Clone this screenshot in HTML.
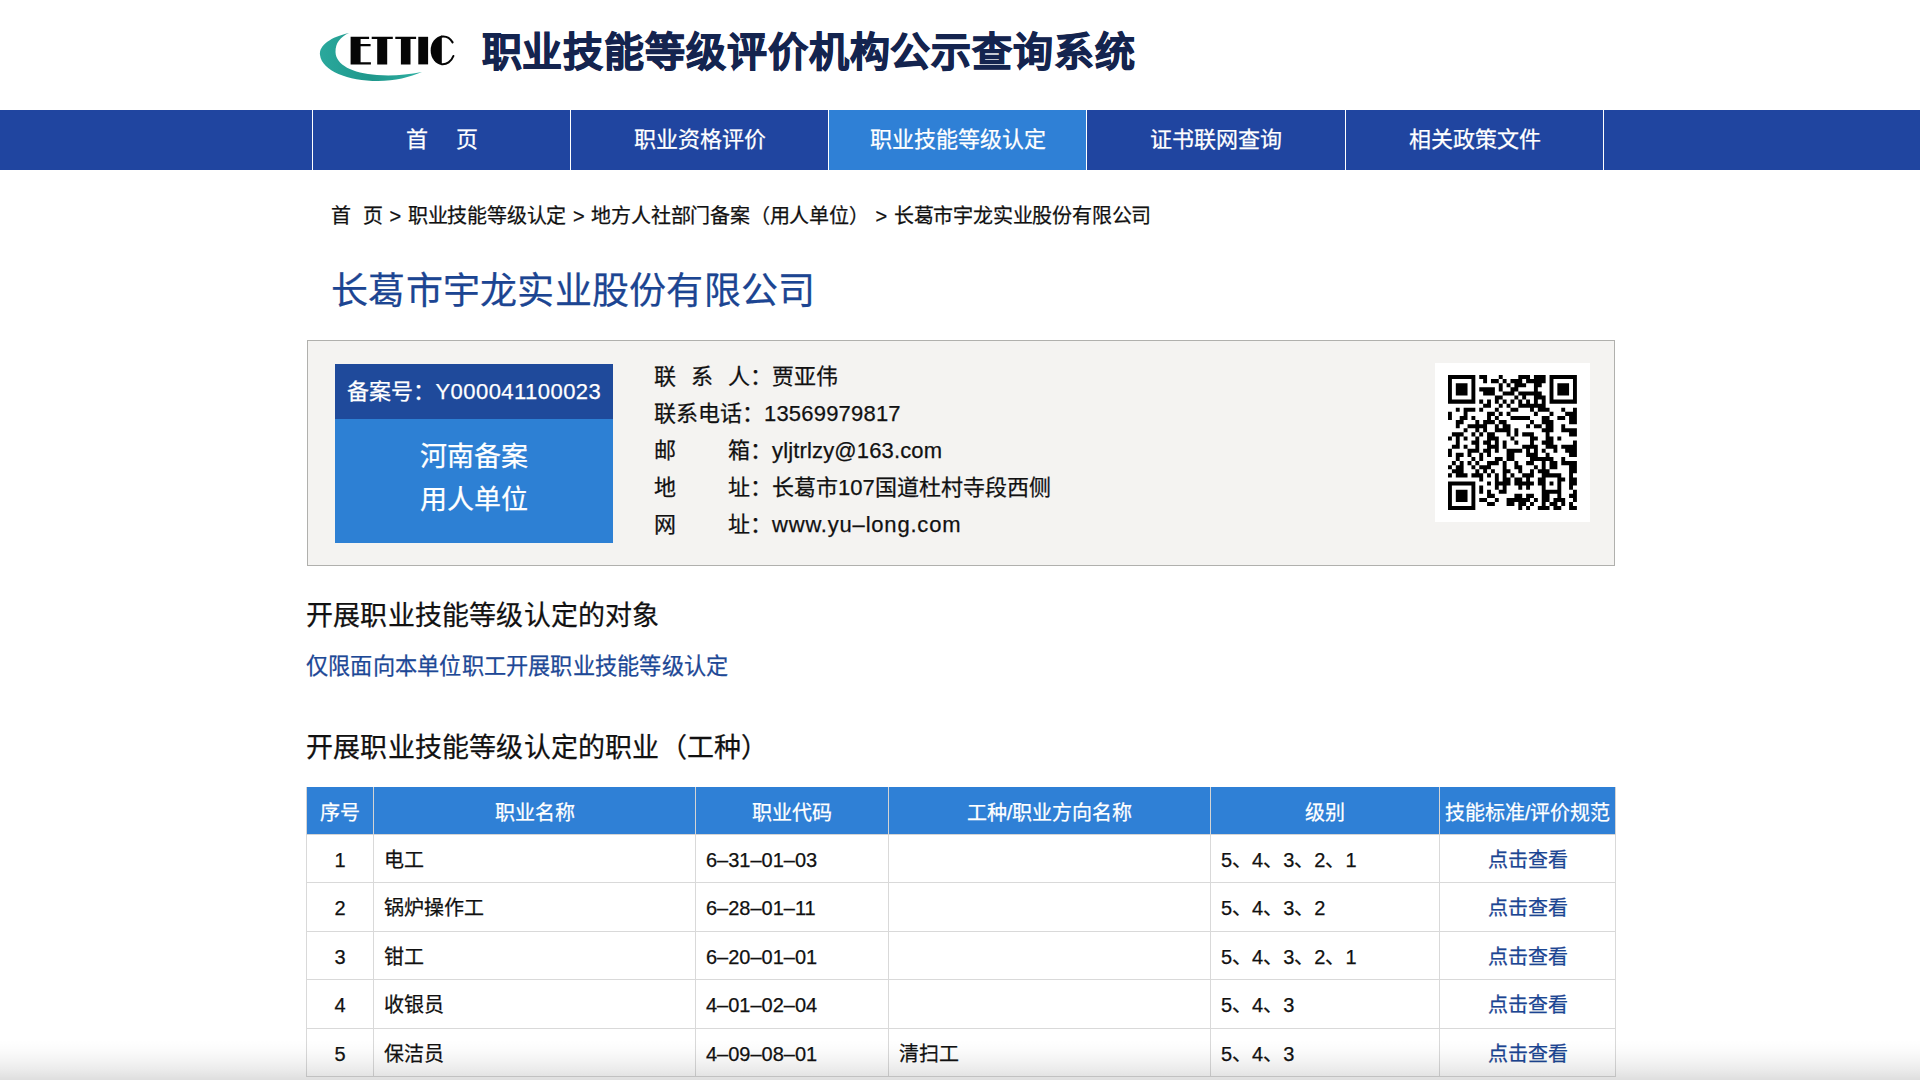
<!DOCTYPE html>
<html lang="zh-CN">
<head>
<meta charset="utf-8">
<title>职业技能等级评价机构公示查询系统</title>
<style>
*{margin:0;padding:0;box-sizing:border-box}
html,body{width:1920px;height:1080px;overflow:hidden;background:#fff}
body{font-family:"Liberation Sans",sans-serif;color:#111;position:relative;-webkit-text-stroke:0.25px currentColor}
.abs{position:absolute;white-space:nowrap}
#logo{left:300px;top:20px;width:180px;height:80px}
#title{left:481.5px;top:27px;font-size:40px;font-weight:bold;color:#14244f;line-height:50px;letter-spacing:0.9px;-webkit-text-stroke:1px #14244f}
#nav{left:0;top:110px;width:1920px;height:60px;background:#2045a0}
.ni{position:absolute;top:0;height:60px;line-height:60px;text-align:center;color:#fff;font-size:22px;border-left:1.5px solid #fff}
.ni.act{background:#2f80d6}
#bc{left:331px;top:202px;font-size:20px;line-height:28px;color:#111;word-spacing:1.5px;letter-spacing:-0.2px}
#cname{left:331px;top:268px;font-size:37px;line-height:48px;color:#1c4592;letter-spacing:0.25px}
#info{left:307px;top:340px;width:1308px;height:226px;background:#f4f3f1;border:1.5px solid #b0b0ad}
#card{left:335px;top:364px;width:278px;height:179px;background:#2d80d4}
#cardtop{left:0;top:0;width:278px;height:55px;background:#1f4a9b;color:#fff;font-size:22px;line-height:55px;text-align:center}
#cardb{left:0;top:55px;width:278px;color:#fff;font-size:27px;line-height:43.5px;text-align:center;padding-top:16.5px}
.il{position:absolute;left:654px;font-size:22px;line-height:30px;color:#111}
.lb{display:inline-block}
#qr{left:1435px;top:362.5px;width:154.5px;height:159px;background:#fff}
.h2{left:306px;font-size:27px;line-height:36px;color:#111;letter-spacing:0.2px}
#obj{left:306px;top:652px;font-size:22.2px;line-height:30px;color:#1d4896;letter-spacing:0.22px}
table{position:absolute;left:306px;top:787px;width:1310px;border-collapse:collapse;font-size:20px;table-layout:fixed}
th{line-height:24px;background:#2f80d6;color:#fff;font-weight:normal;height:47px;padding-top:5px;box-sizing:border-box;border:1.5px solid #d4d4d4;border-top:none}
td{line-height:24px;height:48.55px;border:1.5px solid #d9d9d9;color:#111;padding-left:10px;padding-top:3px;box-sizing:border-box}
td.c{text-align:center;padding-left:0}
td a{color:#1c4592;text-decoration:none}
#shade{left:0;top:1040px;width:1920px;height:40px;background:linear-gradient(to bottom,rgba(0,0,0,0) 0%,rgba(0,0,0,0.015) 25%,rgba(0,0,0,0.045) 50%,rgba(0,0,0,0.08) 75%,rgba(0,0,0,0.13) 100%)}
</style>
</head>
<body>
<svg id="logo" class="abs" viewBox="300 20 180 80">
<defs><linearGradient id="tg" x1="0" y1="0" x2="1" y2="0"><stop offset="0" stop-color="#2aa89c"/><stop offset="0.5" stop-color="#1f978b"/><stop offset="1" stop-color="#2fb0a3"/></linearGradient></defs>
<path d="M349 33 C331 37 319 45 320 55 C322 71 348 81 378 81 C395 81 410 77 422 72 C406 75 392 76 377 75 C352 73 336 65 335.5 52 C335.5 43 340 37 349 33 Z" fill="url(#tg)"/>
<g fill="#050505"><path d="M350.6 36.7H369.1V38.9H360.6V44.1H370.6V46.3H360.6V62.2H370.9V64.4H350.6Z"/><path d="M371.7 36.7H392.8V38.9H387.2V64.4H377.2V38.9H371.7Z"/><path d="M395.3 36.7H416.1V38.9H410.5V64.4H400.9V38.9H395.3Z"/><path d="M418.3 36.8H428.1V64.4H418.3Z"/><path d="M441.8 35.7A12.6 14.8 0 0 0 441.8 65.1Z"/></g><path d="M441.6 36.6A11.7 13.9 0 0 1 452.6 42.4M441.6 64.2A11.7 13.9 0 0 0 453.4 56" fill="none" stroke="#050505" stroke-width="2.1" stroke-linecap="round"/>
</svg>
<div id="title" class="abs">职业技能等级评价机构公示查询系统</div>
<div id="nav" class="abs">
  <div class="ni" style="left:312px;width:258px">首<span style="display:inline-block;width:28px"></span>页</div>
  <div class="ni" style="left:570px;width:258px">职业资格评价</div>
  <div class="ni act" style="left:828px;width:258px">职业技能等级认定</div>
  <div class="ni" style="left:1086px;width:259px">证书联网查询</div>
  <div class="ni" style="left:1345px;width:258px">相关政策文件</div>
  <div class="ni" style="left:1603px;width:2px"></div>
</div>
<div id="bc" class="abs">首<span style="display:inline-block;width:12px"></span>页 &gt; 职业技能等级认定 &gt; 地方人社部门备案（用人单位） &gt; 长葛市宇龙实业股份有限公司</div>
<div id="cname" class="abs">长葛市宇龙实业股份有限公司</div>
<div id="info" class="abs"></div>
<div id="card" class="abs">
  <div id="cardtop" class="abs"><span style="position:absolute;left:12px">备案号：</span><span style="position:absolute;left:100.5px;letter-spacing:0.45px">Y000041100023</span></div>
  <div id="cardb" class="abs">河南备案<br>用人单位</div>
</div>
<div class="il abs" style="top:361.5px"><span class="lb" style="width:37px">联</span><span class="lb" style="width:37px">系</span><span class="lb" style="width:44px">人：</span><span class="v">贾亚伟</span></div>
<div class="il abs" style="top:398.5px"><span class="lb" style="width:110px">联系电话：</span><span class="v" style="letter-spacing:0.2px">13569979817</span></div>
<div class="il abs" style="top:435.5px"><span class="lb" style="width:74px">邮</span><span class="lb" style="width:44px">箱：</span><span class="v" style="letter-spacing:0.15px">yljtrlzy@163.com</span></div>
<div class="il abs" style="top:472.5px"><span class="lb" style="width:74px">地</span><span class="lb" style="width:44px">址：</span><span class="v">长葛市107国道杜村寺段西侧</span></div>
<div class="il abs" style="top:509.5px"><span class="lb" style="width:74px">网</span><span class="lb" style="width:44px">址：</span><span class="v" style="letter-spacing:0.8px">www.yu–long.com</span></div>
<div id="qr" class="abs"><svg width="128.9" height="135.2" viewBox="0 0 33 33" preserveAspectRatio="none" style="position:absolute;left:13px;top:12.7px"><path fill="#000" d="M0 0h7v1h-7zM8 0h2v1h-2zM13 0h1v1h-1zM18 0h3v1h-3zM22 0h3v1h-3zM26 0h7v1h-7zM0 1h1v1h-1zM6 1h1v1h-1zM9 1h1v1h-1zM11 1h2v1h-2zM14 1h1v1h-1zM16 1h3v1h-3zM20 1h5v1h-5zM26 1h1v1h-1zM32 1h1v1h-1zM0 2h1v1h-1zM2 2h3v1h-3zM6 2h1v1h-1zM13 2h1v1h-1zM15 2h1v1h-1zM17 2h3v1h-3zM22 2h2v1h-2zM26 2h1v1h-1zM28 2h3v1h-3zM32 2h1v1h-1zM0 3h1v1h-1zM2 3h3v1h-3zM6 3h1v1h-1zM8 3h4v1h-4zM13 3h1v1h-1zM16 3h2v1h-2zM22 3h1v1h-1zM26 3h1v1h-1zM28 3h3v1h-3zM32 3h1v1h-1zM0 4h1v1h-1zM2 4h3v1h-3zM6 4h1v1h-1zM9 4h3v1h-3zM14 4h3v1h-3zM18 4h6v1h-6zM26 4h1v1h-1zM28 4h3v1h-3zM32 4h1v1h-1zM0 5h1v1h-1zM6 5h1v1h-1zM12 5h2v1h-2zM17 5h1v1h-1zM19 5h1v1h-1zM22 5h3v1h-3zM26 5h1v1h-1zM32 5h1v1h-1zM0 6h7v1h-7zM8 6h1v1h-1zM10 6h1v1h-1zM12 6h1v1h-1zM14 6h1v1h-1zM16 6h1v1h-1zM18 6h1v1h-1zM20 6h1v1h-1zM22 6h1v1h-1zM24 6h1v1h-1zM26 6h7v1h-7zM9 7h2v1h-2zM13 7h1v1h-1zM15 7h1v1h-1zM18 7h7v1h-7zM2 8h1v1h-1zM4 8h3v1h-3zM8 8h1v1h-1zM12 8h1v1h-1zM16 8h2v1h-2zM21 8h1v1h-1zM23 8h3v1h-3zM29 8h1v1h-1zM32 8h1v1h-1zM0 9h1v1h-1zM4 9h1v1h-1zM10 9h2v1h-2zM13 9h1v1h-1zM15 9h1v1h-1zM22 9h1v1h-1zM26 9h1v1h-1zM30 9h3v1h-3zM0 10h1v1h-1zM3 10h2v1h-2zM6 10h1v1h-1zM10 10h1v1h-1zM12 10h1v1h-1zM16 10h5v1h-5zM24 10h2v1h-2zM28 10h2v1h-2zM31 10h2v1h-2zM2 11h2v1h-2zM7 11h1v1h-1zM9 11h3v1h-3zM13 11h2v1h-2zM21 11h1v1h-1zM24 11h3v1h-3zM31 11h2v1h-2zM2 12h1v1h-1zM5 12h5v1h-5zM12 12h1v1h-1zM14 12h2v1h-2zM20 12h1v1h-1zM22 12h2v1h-2zM25 12h2v1h-2zM29 12h1v1h-1zM4 13h1v1h-1zM7 13h1v1h-1zM9 13h1v1h-1zM12 13h4v1h-4zM17 13h1v1h-1zM24 13h3v1h-3zM29 13h4v1h-4zM1 14h3v1h-3zM6 14h1v1h-1zM8 14h1v1h-1zM10 14h2v1h-2zM15 14h1v1h-1zM17 14h1v1h-1zM19 14h3v1h-3zM25 14h1v1h-1zM31 14h2v1h-2zM0 15h1v1h-1zM2 15h1v1h-1zM4 15h1v1h-1zM7 15h1v1h-1zM10 15h3v1h-3zM16 15h1v1h-1zM21 15h2v1h-2zM25 15h2v1h-2zM28 15h1v1h-1zM2 16h1v1h-1zM6 16h2v1h-2zM9 16h2v1h-2zM12 16h1v1h-1zM14 16h1v1h-1zM17 16h1v1h-1zM21 16h1v1h-1zM24 16h3v1h-3zM32 16h1v1h-1zM1 17h2v1h-2zM4 17h1v1h-1zM7 17h1v1h-1zM10 17h3v1h-3zM14 17h1v1h-1zM19 17h4v1h-4zM25 17h3v1h-3zM29 17h4v1h-4zM0 18h1v1h-1zM5 18h3v1h-3zM9 18h2v1h-2zM12 18h1v1h-1zM15 18h4v1h-4zM20 18h1v1h-1zM22 18h1v1h-1zM24 18h1v1h-1zM27 18h1v1h-1zM30 18h3v1h-3zM0 19h1v1h-1zM2 19h2v1h-2zM5 19h1v1h-1zM8 19h1v1h-1zM10 19h1v1h-1zM15 19h2v1h-2zM20 19h3v1h-3zM25 19h1v1h-1zM31 19h2v1h-2zM2 20h1v1h-1zM6 20h1v1h-1zM8 20h1v1h-1zM12 20h2v1h-2zM15 20h2v1h-2zM21 20h6v1h-6zM29 20h1v1h-1zM1 21h1v1h-1zM3 21h1v1h-1zM5 21h1v1h-1zM7 21h1v1h-1zM10 21h3v1h-3zM14 21h1v1h-1zM17 21h1v1h-1zM20 21h2v1h-2zM24 21h1v1h-1zM26 21h2v1h-2zM29 21h4v1h-4zM0 22h1v1h-1zM2 22h2v1h-2zM6 22h1v1h-1zM8 22h3v1h-3zM14 22h1v1h-1zM17 22h2v1h-2zM22 22h1v1h-1zM24 22h1v1h-1zM26 22h2v1h-2zM31 22h2v1h-2zM1 23h3v1h-3zM7 23h1v1h-1zM9 23h1v1h-1zM11 23h1v1h-1zM14 23h2v1h-2zM18 23h1v1h-1zM21 23h1v1h-1zM23 23h3v1h-3zM31 23h2v1h-2zM0 24h1v1h-1zM2 24h3v1h-3zM6 24h3v1h-3zM10 24h1v1h-1zM12 24h1v1h-1zM14 24h1v1h-1zM16 24h1v1h-1zM19 24h3v1h-3zM24 24h5v1h-5zM31 24h1v1h-1zM8 25h1v1h-1zM12 25h1v1h-1zM14 25h2v1h-2zM17 25h2v1h-2zM20 25h1v1h-1zM23 25h2v1h-2zM28 25h2v1h-2zM31 25h2v1h-2zM0 26h7v1h-7zM10 26h1v1h-1zM12 26h4v1h-4zM17 26h5v1h-5zM23 26h2v1h-2zM26 26h1v1h-1zM28 26h1v1h-1zM31 26h2v1h-2zM0 27h1v1h-1zM6 27h1v1h-1zM8 27h1v1h-1zM12 27h1v1h-1zM14 27h1v1h-1zM18 27h1v1h-1zM20 27h1v1h-1zM24 27h1v1h-1zM28 27h1v1h-1zM31 27h1v1h-1zM0 28h1v1h-1zM2 28h3v1h-3zM6 28h1v1h-1zM8 28h1v1h-1zM10 28h1v1h-1zM13 28h2v1h-2zM24 28h5v1h-5zM32 28h1v1h-1zM0 29h1v1h-1zM2 29h3v1h-3zM6 29h1v1h-1zM10 29h2v1h-2zM17 29h2v1h-2zM20 29h2v1h-2zM24 29h2v1h-2zM28 29h1v1h-1zM31 29h2v1h-2zM0 30h1v1h-1zM2 30h3v1h-3zM6 30h1v1h-1zM8 30h2v1h-2zM12 30h1v1h-1zM15 30h6v1h-6zM22 30h1v1h-1zM24 30h2v1h-2zM27 30h3v1h-3zM32 30h1v1h-1zM0 31h1v1h-1zM6 31h1v1h-1zM10 31h2v1h-2zM15 31h2v1h-2zM18 31h2v1h-2zM21 31h1v1h-1zM24 31h1v1h-1zM26 31h2v1h-2zM29 31h1v1h-1zM31 31h1v1h-1zM0 32h7v1h-7zM18 32h1v1h-1zM20 32h1v1h-1zM23 32h3v1h-3zM27 32h2v1h-2zM31 32h2v1h-2z"/></svg></div>
<div class="h2 abs" style="top:598px">开展职业技能等级认定的对象</div>
<div id="obj" class="abs">仅限面向本单位职工开展职业技能等级认定</div>
<div class="h2 abs" style="top:729.5px">开展职业技能等级认定的职业（工种）</div>
<table>
<tr><th style="width:67px">序号</th><th style="width:322px">职业名称</th><th style="width:193px">职业代码</th><th style="width:322px">工种/职业方向名称</th><th style="width:229px">级别</th><th>技能标准/评价规范</th></tr>
<tr><td class="c">1</td><td>电工</td><td>6–31–01–03</td><td></td><td>5、4、3、2、1</td><td class="c"><a>点击查看</a></td></tr>
<tr><td class="c">2</td><td>锅炉操作工</td><td>6–28–01–11</td><td></td><td>5、4、3、2</td><td class="c"><a>点击查看</a></td></tr>
<tr><td class="c">3</td><td>钳工</td><td>6–20–01–01</td><td></td><td>5、4、3、2、1</td><td class="c"><a>点击查看</a></td></tr>
<tr><td class="c">4</td><td>收银员</td><td>4–01–02–04</td><td></td><td>5、4、3</td><td class="c"><a>点击查看</a></td></tr>
<tr><td class="c">5</td><td>保洁员</td><td>4–09–08–01</td><td>清扫工</td><td>5、4、3</td><td class="c"><a>点击查看</a></td></tr>
</table>
<div id="shade" class="abs"></div>
</body>
</html>
